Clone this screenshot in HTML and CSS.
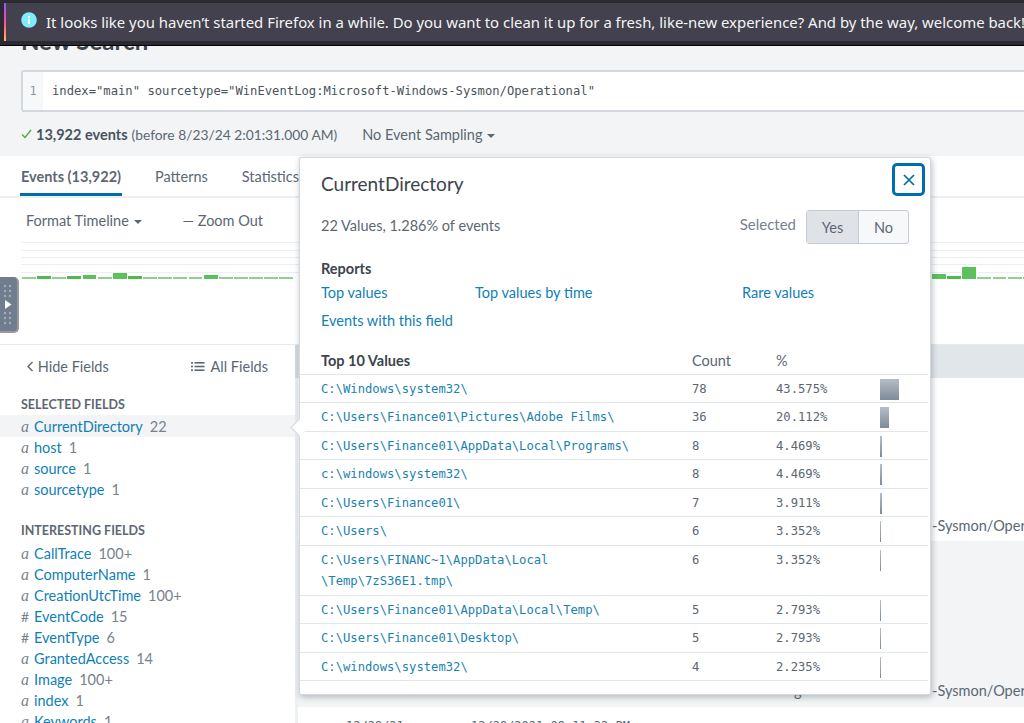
FILE: index.html
```html
<!DOCTYPE html>
<html lang="en">
<head>
  <meta charset="UTF-8" />
  <title>New Search</title>
  <link rel="stylesheet" href="styles.css">
</head>
<body>

  <div class="notice">
    <div class="notice-inner">
      <span class="notice-stripe"></span>
      <svg class="notice-icon" width="16" height="16" viewBox="0 0 16 16">
        <circle cx="8" cy="8" r="7.8" fill="#80ebff"/>
        <rect x="7" y="7" width="2" height="5" fill="#fff"/>
        <rect x="7" y="4" width="2" height="2" fill="#fff"/>
      </svg>
      <span class="notice-text">It looks like you haven’t started Firefox in a while. Do you want to clean it up for a fresh, like-new experience? And by the way, welcome back!</span>
    </div>
  </div>

  <div class="search-head">
    <h2 class="page-title">New Search</h2>
    <div class="search-box">
      <span class="line-no">1</span>
      <span class="query">index="main" sourcetype="WinEventLog:Microsoft-Windows-Sysmon/Operational"</span>
    </div>
    <div class="status">
      <svg width="11" height="10" viewBox="0 0 11 10"><path d="M1 5.5 L4 8.5 L10 1" fill="none" stroke="#4aa84a" stroke-width="1.3"/></svg>
      <b>13,922 events</b>
      <span class="status-time">(before 8/23/24 2:01:31.000 AM)</span>
      <span class="sampling">No Event Sampling <i class="caret"></i></span>
    </div>
  </div>

  <div class="tabs">
    <a class="tab active">Events (13,922)</a>
    <a class="tab">Patterns</a>
    <a class="tab">Statistics</a>
  </div>

  <div class="timeline-tools">
    <span class="tool-format">Format Timeline <i class="caret"></i></span>
    <span class="tool-zoom">— Zoom Out</span>
  </div>

  <div class="timeline">
    <div class="chart">
      <div class="bars">
        <i class="bar"></i><i class="bar b3"></i><i class="bar"></i><i class="bar b3"></i><i class="bar b4"></i><i class="bar"></i>
        <i class="bar b6"></i><i class="bar b3"></i><i class="bar"></i><i class="bar"></i><i class="bar"></i><i class="bar"></i>
        <i class="bar b4"></i><i class="bar"></i><i class="bar"></i><i class="bar"></i><i class="bar"></i><i class="bar"></i>
      </div>
      <div class="bars bars-right">
        <i class="bar b5"></i><i class="bar b3"></i><i class="bar b12"></i><i class="bar"></i><i class="bar"></i><i class="bar"></i><i class="bar"></i>
      </div>
    </div>
  </div>

  <div class="handle">
    <svg width="15" height="54" viewBox="0 0 15 54">
      <g fill="#a3adb9">
        <circle cx="5" cy="8" r="1.2"/><circle cx="10" cy="8" r="1.2"/>
        <circle cx="5" cy="13" r="1.2"/><circle cx="10" cy="13" r="1.2"/>
        <circle cx="5" cy="18" r="1.2"/><circle cx="10" cy="18" r="1.2"/>
        <circle cx="5" cy="35" r="1.2"/><circle cx="10" cy="35" r="1.2"/>
        <circle cx="5" cy="40" r="1.2"/><circle cx="10" cy="40" r="1.2"/>
        <circle cx="5" cy="45" r="1.2"/><circle cx="10" cy="45" r="1.2"/>
      </g>
      <polygon points="5,22 11.5,26.5 5,31" fill="#fff"/>
    </svg>
  </div>

  <div class="results-area">
    <div class="sidebar">
      <div class="side-top">
        <span class="hide-fields">
          <svg width="8" height="11" viewBox="0 0 8 11"><path d="M6.5 1 L2 5.5 L6.5 10" fill="none" stroke="#5c6773" stroke-width="1.4"/></svg>
          Hide Fields
        </span>
        <span class="all-fields">
          <svg width="14" height="11" viewBox="0 0 14 11" fill="#5c6773"><rect x="0" y="1" width="2" height="1.6"/><rect x="3.5" y="1" width="10" height="1.6"/><rect x="0" y="4.7" width="2" height="1.6"/><rect x="3.5" y="4.7" width="10" height="1.6"/><rect x="0" y="8.4" width="2" height="1.6"/><rect x="3.5" y="8.4" width="10" height="1.6"/></svg>
          All Fields
        </span>
      </div>

      <h4 class="field-head">SELECTED FIELDS</h4>
      <div class="field current"><span class="type">a</span><a>CurrentDirectory</a><span class="num">22</span></div>
      <div class="field"><span class="type">a</span><a>host</a><span class="num">1</span></div>
      <div class="field"><span class="type">a</span><a>source</a><span class="num">1</span></div>
      <div class="field"><span class="type">a</span><a>sourcetype</a><span class="num">1</span></div>

      <h4 class="field-head interesting">INTERESTING FIELDS</h4>
      <div class="field"><span class="type">a</span><a>CallTrace</a><span class="num">100+</span></div>
      <div class="field"><span class="type">a</span><a>ComputerName</a><span class="num">1</span></div>
      <div class="field"><span class="type">a</span><a>CreationUtcTime</a><span class="num">100+</span></div>
      <div class="field"><span class="type hash">#</span><a>EventCode</a><span class="num">15</span></div>
      <div class="field"><span class="type hash">#</span><a>EventType</a><span class="num">6</span></div>
      <div class="field"><span class="type">a</span><a>GrantedAccess</a><span class="num">14</span></div>
      <div class="field"><span class="type">a</span><a>Image</a><span class="num">100+</span></div>
      <div class="field"><span class="type">a</span><a>index</a><span class="num">1</span></div>
      <div class="field"><span class="type">a</span><a>Keywords</a><span class="num">1</span></div>
    </div>

    <div class="events">
      <div class="events-head"></div>
      <div class="event-row"><span>-Sysmon/Operational</span></div>
      <div class="event-row alt"><span class="under">g</span><span>-Sysmon/Operational</span></div>
      <div class="event-next">
        <span class="chev">›</span>
        <span class="date-short">12/28/21</span>
        <span class="date-long">12/28/2021 09:11:32 PM</span>
      </div>
    </div>
  </div>

  <div class="popover">
    <span class="popover-arrow"></span>
    <div class="pop-title">
      <h3>CurrentDirectory</h3>
      <button class="close-btn">
        <svg width="12" height="12" viewBox="0 0 12 12"><path d="M1 1 L11 11 M11 1 L1 11" stroke="#006eaa" stroke-width="1.7" fill="none"/></svg>
      </button>
    </div>
    <div class="pop-summary">
      <span class="summary-text">22 Values, 1.286% of events</span>
      <div class="selected">
        <span class="selected-label">Selected</span>
        <div class="toggle"><span class="on">Yes</span><span>No</span></div>
      </div>
    </div>
    <div class="reports">
      <div class="reports-title">Reports</div>
      <div class="report-links">
        <a>Top values</a><a>Top values by time</a><a>Rare values</a>
        <a>Events with this field</a>
      </div>
    </div>
    <table class="values">
      <thead>
        <tr><th class="col-value">Top 10 Values</th><th class="col-count">Count</th><th class="col-pct">%</th><th></th></tr>
      </thead>
      <tbody>
        <tr><td class="val">C:\Windows\system32\</td><td>78</td><td>43.575%</td><td><i class="pct-bar" style="width:19px"></i></td></tr>
        <tr><td class="val">C:\Users\Finance01\Pictures\Adobe Films\</td><td>36</td><td>20.112%</td><td><i class="pct-bar" style="width:9px"></i></td></tr>
        <tr><td class="val">C:\Users\Finance01\AppData\Local\Programs\</td><td>8</td><td>4.469%</td><td><i class="pct-bar" style="width:2px"></i></td></tr>
        <tr><td class="val">c:\windows\system32\</td><td>8</td><td>4.469%</td><td><i class="pct-bar" style="width:2px"></i></td></tr>
        <tr><td class="val">C:\Users\Finance01\</td><td>7</td><td>3.911%</td><td><i class="pct-bar" style="width:2px"></i></td></tr>
        <tr><td class="val">C:\Users\</td><td>6</td><td>3.352%</td><td><i class="pct-bar" style="width:1px"></i></td></tr>
        <tr><td class="val">C:\Users\FINANC~1\AppData\Local<br>\Temp\7zS36E1.tmp\</td><td>6</td><td>3.352%</td><td><i class="pct-bar" style="width:1px"></i></td></tr>
        <tr><td class="val">C:\Users\Finance01\AppData\Local\Temp\</td><td>5</td><td>2.793%</td><td><i class="pct-bar" style="width:1px"></i></td></tr>
        <tr><td class="val">C:\Users\Finance01\Desktop\</td><td>5</td><td>2.793%</td><td><i class="pct-bar" style="width:1px"></i></td></tr>
        <tr><td class="val">C:\windows\system32\</td><td>4</td><td>2.235%</td><td><i class="pct-bar" style="width:1px"></i></td></tr>
      </tbody>
    </table>
  </div>

</body>
</html>
```
FILE: styles.css
```css
* { box-sizing: border-box; }
html, body { height: 100%; }
body {
  margin: 0;
  font-family: 'Lato', 'Open Sans', sans-serif;
  font-size: 14.5px;
  color: #5c6773;
  background: #fff;
  overflow: hidden;
  position: relative;
}

a { color: #107fb5; text-decoration: none; }

/* firefox message on top of the page */
.notice {
  position: absolute;
  top: 0;
  left: 0;
  right: 0;
  height: 46px;
  padding: 3px 0 4px 4px;
  background: #2b2a33;
  border-bottom: 1px solid #000;
  z-index: 30;
  overflow: hidden;
}

.notice-inner {
  display: flex;
  align-items: center;
  height: 38px;
  background: #42414d;
  white-space: nowrap;
  position: relative;
  padding-left: 17px;
  overflow: hidden;
}

.notice-stripe {
  position: absolute;
  left: 0;
  top: 0;
  width: 2px;
  height: 38px;
  background: linear-gradient(#9059ff, #ff4aa2 50%, #ffbd4f);
}

.notice-icon { flex-shrink: 0; margin-right: 9px; margin-top: -4px; }

.notice-text {
  font-family: 'Noto Sans', sans-serif;
  font-size: 14.92px;
  color: #f4f4f6;
}

/* search bar */
.search-head {
  height: 156px;
  padding: 26px 0 0 21px;
  background: #f2f4f5;
  overflow: hidden;
}

.page-title {
  margin: 0;
  height: 44px;
  font-size: 24px;
  line-height: 30px;
  font-weight: 700;
  color: #3c444d;
}

.search-box {
  display: flex;
  align-items: center;
  height: 42px;
  background: #fff;
  border: 2px solid #d3d8de;
  border-right: none;
  border-radius: 3px 0 0 3px;
}

.line-no {
  width: 20px;
  height: 100%;
  line-height: 38px;
  background: #f7f8fa;
  color: #8f99a3;
  font-family: 'DejaVu Sans Mono', monospace;
  font-size: 12px;
  text-align: center;
}

.query {
  margin-left: 9px;
  font-family: 'DejaVu Sans Mono', monospace;
  font-size: 12.2px;
  color: #4a535d;
}

.status {
  display: flex;
  align-items: center;
  height: 44px;
  color: #5c6773;
}

.status b { color: #4a535d; margin-left: 4px; }
.status-time { margin-left: 4px; font-size: 13.8px; }
.sampling { margin-left: 25px; }

.caret {
  display: inline-block;
  width: 0;
  height: 0;
  margin-left: 1px;
  border-left: 4px solid transparent;
  border-right: 4px solid transparent;
  border-top: 4px solid #5c6773;
  vertical-align: 2px;
}

/* tabs */
.tabs {
  display: flex;
  height: 42px;
  padding-left: 20px;
  border-bottom: 2px solid #eceef1;
  gap: 32px;
}

.tab {
  height: 40px;
  padding: 0 1px;
  line-height: 42px;
  color: #5c6773;
}

.tab.active {
  font-weight: 700;
  color: #5c6773;
  border-bottom: 3px solid #006eaa;
}

.timeline-tools {
  display: flex;
  align-items: center;
  height: 44px;
  padding-left: 26px;
  color: #5c6773;
}

.tool-zoom { margin-left: 41px; }

/* timeline */
.timeline {
  height: 103px;
  padding-left: 21px;
  border-bottom: 1px solid #e6e9ed;
  overflow: hidden;
}

.chart {
  display: flex;
  justify-content: space-between;
  align-items: flex-end;
  height: 37px;
  background: repeating-linear-gradient(#eceef0 0 1px, transparent 1px 7.5px);
}

.bars {
  display: flex;
  align-items: flex-end;
  gap: 1.25px;
  padding-left: 1px;
}

.bars-right {
  width: 93px;
  flex-shrink: 0;
  padding-left: 1px;
  overflow: hidden;
}

.bar {
  display: block;
  flex-shrink: 0;
  width: 13.9px;
  height: 2px;
  background: #8fd18f;
}

.b3 { height: 3px; background: #4fb84f; }
.b4 { height: 4px; background: #5cc05c; }
.b5 { height: 5px; background: #5cc05c; }
.b6 { height: 6px; background: #5cc05c; }
.b12 { height: 12px; background: #5cc05c; }

.handle {
  position: absolute;
  left: 0;
  top: 277px;
  width: 19px;
  height: 56px;
  padding: 1px 0;
  background: #6f7d8f;
  border-right: 2px solid #9a9a9a;
  border-bottom: 2px solid #9a9a9a;
  border-radius: 0 5px 5px 0;
  z-index: 10;
}

.handle svg { display: block; }

/* fields and events */
.results-area {
  display: flex;
  height: 378px;
}

.sidebar {
  width: 298px;
  flex-shrink: 0;
  padding-right: 3px;
  background:
    linear-gradient(#d5dae0, #d5dae0) right top / 3px 33px no-repeat,
    linear-gradient(#edf0f2, #edf0f2) right top / 3px 100% no-repeat;
  overflow: hidden;
}

.side-top {
  display: flex;
  justify-content: space-between;
  padding: 13px 27px 0 26px;
  height: 50px;
}

.all-fields svg { margin-right: 2px; }

.field-head {
  margin: 0;
  padding-left: 21px;
  height: 20px;
  font-size: 12.5px;
  line-height: 20px;
  font-weight: 700;
  color: #5c6773;
}

.field-head.interesting { margin-top: 21px; height: 22px; }

.field {
  display: flex;
  align-items: center;
  height: 21px;
  padding-left: 21px;
}

.field.current { background: #f2f4f5; height: 22px; padding-top: 1px; }

.type {
  width: 13px;
  font-family: 'Liberation Serif', serif;
  font-style: italic;
  font-size: 16px;
  color: #78828d;
}

.type.hash { font-style: normal; font-family: 'Lato', sans-serif; font-size: 14px; }

.num { margin-left: 7px; color: #78828d; }

.events {
  flex: 1;
  min-width: 0;
}

.events-head {
  height: 33px;
  background: #e1e6eb;
}

.event-row {
  height: 163px;
  padding: 0 0 7px 634px;
  display: flex;
  align-items: flex-end;
  white-space: nowrap;
  color: #5c6773;
}

.event-row.alt { height: 166px; padding: 0 0 8px 496px; background: #f2f4f5; }
.event-row span { flex-shrink: 0; }
.under { width: 138px; }

.event-next {
  display: flex;
  align-items: center;
  height: 30px;
  padding: 8px 0 0 15px;
  font-family: 'DejaVu Sans Mono', monospace;
  font-size: 12px;
}

.chev { width: 33px; font-size: 16px; }
.date-short { width: 125px; }

/* field summary popover */
.popover {
  position: absolute;
  left: 299px;
  top: 157px;
  width: 632px;
  height: 538px;
  background: #fff;
  border: 1px solid #d3d8de;
  border-radius: 2px;
  box-shadow: 1px 2px 6px rgba(60, 68, 77, 0.35);
  z-index: 20;
}

.popover-arrow {
  position: absolute;
  left: -7px;
  top: 263px;
  width: 13px;
  height: 13px;
  background: #fff;
  border-left: 1px solid #d3d8de;
  border-bottom: 1px solid #d3d8de;
  transform: rotate(45deg);
}

.pop-title {
  display: flex;
  justify-content: space-between;
  padding: 5px 5px 0 21px;
  height: 52px;
}

.pop-title h3 {
  margin: 0;
  padding-top: 9px;
  font-size: 19px;
  font-weight: 400;
  color: #3c444d;
}

.close-btn {
  width: 33px;
  height: 33px;
  padding: 0;
  display: flex;
  align-items: center;
  justify-content: center;
  background: #fff;
  border: 3px solid #006eaa;
  border-radius: 5px;
}

.pop-summary {
  display: flex;
  justify-content: space-between;
  align-items: center;
  height: 33px;
  padding: 0 21px;
  color: #5c6773;
}

.summary-text { margin-top: -2px; }

.selected { display: flex; align-items: center; }
.selected-label { margin: -5px 10px 0 0; font-size: 15px; color: #78828d; }

.toggle {
  display: flex;
  width: 103px;
  height: 34px;
  border: 1px solid #c3cbd4;
  border-radius: 3px;
  background: #f7f8fa;
}

.toggle span {
  flex: 1;
  line-height: 33px;
  text-align: center;
}

.toggle .on {
  flex: none;
  width: 52px;
  background: #dfe3e8;
  border-right: 1px solid #c3cbd4;
}

.reports {
  padding: 15px 21px 0;
  height: 105px;
}

.reports-title {
  font-weight: 700;
  color: #3c444d;
  height: 21px;
  line-height: 22px;
}

.report-links {
  display: grid;
  grid-template-columns: 154px 267px 1fr;
  grid-auto-rows: 28px;
  line-height: 28px;
}

.values {
  width: 628px;
  margin: 0;
  border-collapse: collapse;
  table-layout: fixed;
}

.values th {
  height: 26px;
  padding: 0;
  text-align: left;
  font-weight: 400;
  border-bottom: 1px solid #e1e6eb;
  color: #5c6773;
}

.values th.col-value { width: 392px; padding-left: 21px; font-weight: 700; color: #3c444d; }
.values th.col-count { width: 84px; }
.values th.col-pct { width: 104px; }

.values td {
  padding: 4px 0 2.6px;
  font-family: 'DejaVu Sans Mono', monospace;
  font-size: 12.2px;
  line-height: 21px;
  border-bottom: 1px solid #e1e6eb;
  vertical-align: top;
  color: #5c6773;
}

.values td.val { padding-left: 21px; color: #1a82b0; }

.pct-bar {
  display: block;
  height: 21px;
  background: linear-gradient(#b5bdc7, #7f8b9a);
}
```
